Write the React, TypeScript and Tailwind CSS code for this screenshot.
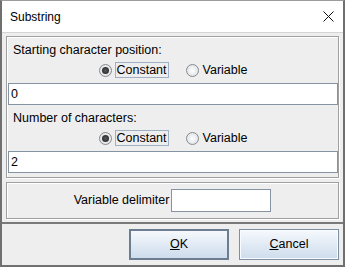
import React from "react";

const font = { fontFamily: '"Liberation Sans", Arial, sans-serif' };

const Radio: React.FC<{ checked?: boolean }> = ({ checked }) => (
    <span className="relative w-[13px] h-[13px] rounded-full border border-[#8a8a8a] bg-radial from-[#ffffff] to-[#d6dbe2] flex items-center justify-center">
        {checked && (
            <span className="w-[7px] h-[7px] rounded-full bg-radial from-[#5a5a5a] to-[#1e1e1e]" />
        )}
    </span>
);

const RadioRow: React.FC = () => (
    <div className="flex items-center justify-center h-[16px]">
        <Radio checked />
        <span className="ml-[3px] h-[16px] px-[1px] border border-[#9fb0c4] flex items-center leading-none">
            Constant
        </span>
        <span className="ml-[17px]">
            <Radio />
        </span>
        <span className="ml-[4px] leading-none">Variable</span>
    </div>
);

const Field: React.FC<{ value: string }> = ({ value }) => (
    <div className="h-[22px] bg-white border border-[#8593a2] flex items-center pl-[2px] leading-none">
        {value}
    </div>
);

const etched = "border border-[#a0a0a0] shadow-[inset_1px_1px_0_#ffffff,1px_1px_0_#ffffff]";

export default function App() {
    return (
        <div
            style={font}
            className="w-[345px] h-[267px] bg-[#eeeeee] flex flex-col border-l-2 border-r-2 border-b-2 border-t border-[#707070] border-t-[#9c9c9c] text-[12.5px] text-black"
        >
            {/* Title bar */}
            <div className="h-[32px] bg-white flex items-center justify-between pl-[8px] pr-[9px] border-b border-[#d4d4d4]">
                <span className="text-[12px]">Substring</span>
                <svg width="11" height="11" viewBox="0 0 11 11">
                    <path d="M0.5 0.5L10.5 10.5M10.5 0.5L0.5 10.5" stroke="#111" strokeWidth="1" />
                </svg>
            </div>

            {/* Content */}
            <div className="h-[191px] pt-[3px] pl-[4px] pr-[4px] border-b-2 border-[#7a7a7a] flex flex-col">
                <div className={`h-[142px] ${etched} pl-[1px] flex flex-col`}>
                    <div className="mt-[6px] ml-[5px] h-[15px] leading-[15px]">Starting character position:</div>
                    <div className="mt-[4px]">
                        <RadioRow />
                    </div>
                    <div className="mt-[5px]">
                        <Field value="0" />
                    </div>
                    <div className="mt-[6px] ml-[5px] h-[15px] leading-[15px]">Number of characters:</div>
                    <div className="mt-[4px]">
                        <RadioRow />
                    </div>
                    <div className="mt-[5px]">
                        <Field value="2" />
                    </div>
                </div>
                <div className={`mt-[4px] h-[37px] ${etched} flex items-center justify-center`}>
                    <span className="leading-none">Variable delimiter</span>
                    <div className="ml-[2px] w-[100px] h-[23px] bg-white border border-[#8593a2]" />
                </div>
            </div>

            {/* Buttons */}
            <div className="flex-1 flex justify-end items-start pt-[5px] pr-[4px] gap-[10px]">
                <button className="w-[100px] h-[31px] border-2 border-[#6c7d91] bg-linear-to-b from-[#f6f9fd] to-[#cddcec] text-[12.5px]">
                    <span className="underline">O</span>K
                </button>
                <button className="w-[100px] h-[31px] border border-[#7f8fa2] shadow-[inset_0_0_0_1px_#f8fbff] bg-linear-to-b from-[#f6f9fd] to-[#cddcec] text-[12.5px]">
                    <span className="underline">C</span>ancel
                </button>
            </div>
        </div>
    );
}
